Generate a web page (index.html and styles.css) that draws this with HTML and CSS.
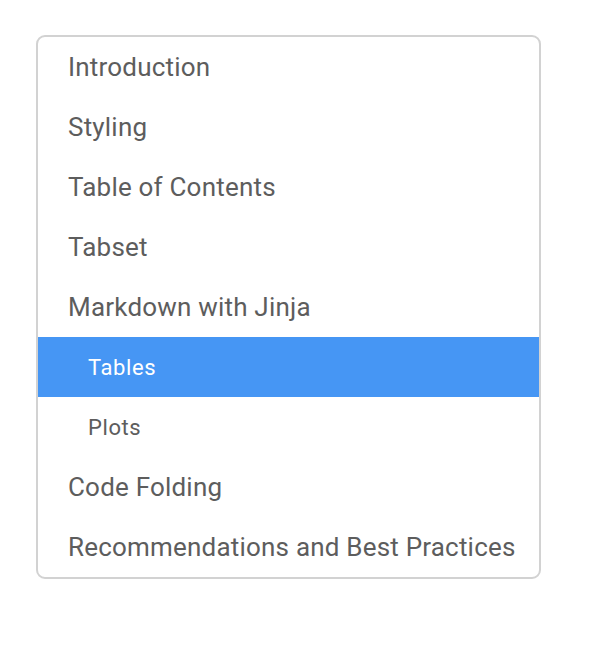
FILE: index.html
```html
<!DOCTYPE html>
<html>
<head>
<meta charset="utf-8">
<link rel="stylesheet" href="styles.css">
</head>
<body>
<nav class="toc">
  <div class="item">Introduction</div>
  <div class="item">Styling</div>
  <div class="item">Table of Contents</div>
  <div class="item">Tabset</div>
  <div class="item">Markdown with Jinja</div>
  <div class="item sub active">Tables</div>
  <div class="item sub">Plots</div>
  <div class="item">Code Folding</div>
  <div class="item">Recommendations and Best Practices</div>
</nav>
</body>
</html>
```
FILE: styles.css
```css
html, body {
  margin: 0;
  padding: 0;
  background: #fff;
}
body {
  padding: 35px 0 0 36px;
  font-family: Roboto, "Liberation Sans", sans-serif;
}
.toc {
  width: 501px;
  border: 2px solid #d2d2d2;
  border-radius: 9px;
  overflow: hidden;
}
.item {
  height: 60px;
  display: flex;
  align-items: center;
  padding-left: 30px;
  font-size: 26px;
  letter-spacing: 0.2px;
  color: #5d5d5d;
}
.item.sub {
  padding-left: 50px;
  font-size: 22px;
  letter-spacing: 0.6px;
}
.item.active {
  background: #4696f4;
  color: #ffffff;
}
```
